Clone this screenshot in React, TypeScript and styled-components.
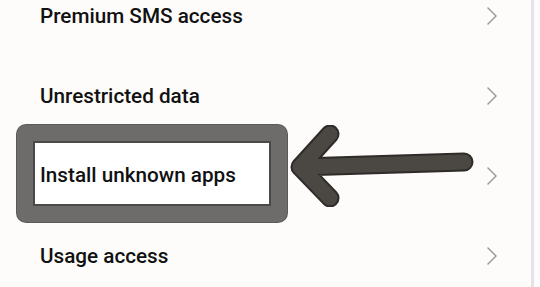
import React from "react";
import styled, { createGlobalStyle } from "styled-components";

const GlobalStyle = createGlobalStyle`
  html, body {
    margin: 0;
    padding: 0;
    background: #fdfcfa;
  }
`;

const Page = styled.div`
  position: relative;
  width: 540px;
  height: 287px;
  overflow: hidden;
  display: flex;
  background: #fdfcfa;
  font-family: Roboto, "Liberation Sans", sans-serif;
`;

const Panel = styled.div`
  width: 531px;
  display: flex;
  flex-direction: column;
  margin-top: -24px;
`;

const ScrollEdge = styled.div`
  width: 3px;
  background: #e5e2e8;
`;

const Row = styled.div`
  height: 80px;
  flex: none;
  display: flex;
  align-items: center;
  justify-content: space-between;
  padding: 0 34px 0 40px;
`;

const Label = styled.span`
  font-size: 20.7px;
  font-weight: 500;
  color: #111;
`;

const Chevron = styled.svg`
  width: 10px;
  height: 18px;
  color: #9b9b9b;
`;

const Highlight = styled.div`
  position: absolute;
  left: 17px;
  top: 125px;
  width: 270px;
  height: 97px;
  box-sizing: border-box;
  border: 16px solid #6e6c6b;
  border-radius: 9px;
  box-shadow: inset 0 0 0 2px #4c4a48, 0 0 0 1px #5c5a59;
  background: #ffffff;
  display: flex;
  align-items: center;
  padding: 3px 0 0 7px;
`;

const Arrow = styled.svg`
  position: absolute;
  left: 288px;
  top: 125px;
  width: 190px;
  height: 82px;
`;

const items = [
  "Premium SMS access",
  "Unrestricted data",
  "Install unknown apps",
  "Usage access",
];

const ChevronIcon = () => (
  <Chevron viewBox="0 0 10 18">
    <path d="M1 1 L9 9 L1 17" fill="none" stroke="currentColor" strokeWidth="1.5" strokeLinecap="round" strokeLinejoin="round" />
  </Chevron>
);

export default function App() {
  return (
    <>
      <GlobalStyle />
      <Page>
        <Panel>
          {items.map((name) => (
            <Row key={name}>
              <Label>{name}</Label>
              <ChevronIcon />
            </Row>
          ))}
        </Panel>
        <ScrollEdge />
        <Highlight>
          <Label>Install unknown apps</Label>
        </Highlight>
        <Arrow viewBox="0 0 190 82">
          <g fill="none" strokeLinecap="round" strokeLinejoin="round">
            <path d="M42 9 L12 42 L42 73 M12 42 L176 37" stroke="#2e2b28" strokeWidth="19" />
            <path d="M42 9 L12 42 L42 73 M12 42 L176 37" stroke="#4b4742" strokeWidth="15" />
          </g>
        </Arrow>
      </Page>
    </>
  );
}
